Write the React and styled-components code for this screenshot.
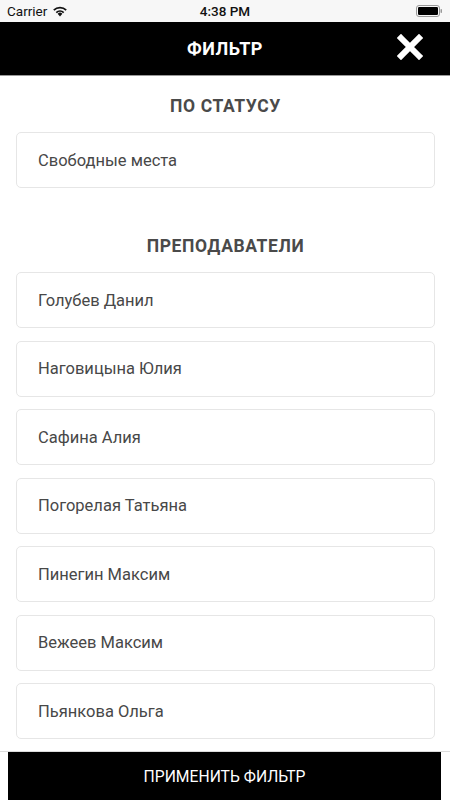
import React from 'react';
import styled, { createGlobalStyle } from 'styled-components';

const GlobalStyle = createGlobalStyle`
    html, body {
        margin: 0;
        padding: 0;
        background: #fff;
        font-family: Roboto, "Noto Sans", "Liberation Sans", sans-serif;
    }
`;

const Screen = styled.div`
    width: 450px;
    height: 800px;
    display: flex;
    flex-direction: column;
    background: #fff;
    overflow: hidden;
`;

const StatusBar = styled.div`
    height: 22px;
    background: #f7f7f7;
    display: grid;
    grid-template-columns: 1fr auto 1fr;
    align-items: center;
    padding: 0 7px;
    font-size: 13.5px;
    color: #111;
`;

const Carrier = styled.div`
    display: flex;
    align-items: center;
    gap: 5px;
`;

const Time = styled.div`
    font-weight: 500;
`;

const Battery = styled.div`
    justify-self: end;
    display: flex;
    align-items: center;
`;

const Header = styled.div`
    height: 53px;
    background: #000;
    border-bottom: 1px solid #999;
    display: flex;
    align-items: center;
    justify-content: center;
    position: relative;
`;

const Title = styled.h1`
    margin: 0;
    color: #fff;
    font-size: 18px;
    font-weight: 700;
    letter-spacing: 0.5px;
`;

const Close = styled.button`
    position: absolute;
    right: 26px;
    top: 11px;
    width: 28px;
    height: 28px;
    padding: 0;
    border: none;
    background: none;
    display: flex;
    align-items: center;
    justify-content: center;
`;

const Content = styled.div`
    flex: 1;
    overflow: hidden;
    padding: 0 15px 0 16px;
`;

const SectionTitle = styled.h2`
    margin: ${p => p.$mt}px 0 16px;
    line-height: 20px;
    text-align: center;
    font-size: 17.5px;
    font-weight: 700;
    color: #4a4a4a;
    letter-spacing: 0.6px;
`;

const List = styled.div`
    display: flex;
    flex-direction: column;
    gap: 12.5px;
`;

const Item = styled.div`
    height: 56px;
    box-sizing: border-box;
    border: 1px solid #e6e6e6;
    border-radius: 5px;
    display: flex;
    align-items: center;
    padding-left: 21px;
    font-size: 16.5px;
    color: #484848;
`;

const Footer = styled.div`
    border-top: 1px solid #dcdcdc;
    padding: 0 9px 0 8px;
`;

const ApplyButton = styled.button`
    width: 100%;
    height: 48px;
    border: none;
    background: #000;
    color: #fff;
    font-family: inherit;
    font-size: 15.7px;
    display: flex;
    align-items: center;
    justify-content: center;
`;

const teachers = [
    'Голубев Данил',
    'Наговицына Юлия',
    'Сафина Алия',
    'Погорелая Татьяна',
    'Пинегин Максим',
    'Вежеев Максим',
    'Пьянкова Ольга',
];

const App = () => (
    <>
        <GlobalStyle />
        <Screen>
            <StatusBar>
                <Carrier>
                    Carrier
                    <svg width="16" height="12" viewBox="0 0 16 12">
                        <path d="M8 11.5 L5.6 8.8 A3.4 3.4 0 0 1 10.4 8.8 Z" fill="#111" />
                        <path d="M3.7 6.9 A6.2 6.2 0 0 1 12.3 6.9 L11.1 8.2 A4.5 4.5 0 0 0 4.9 8.2 Z" fill="#111" />
                        <path d="M1.2 4.4 A9.8 9.8 0 0 1 14.8 4.4 L13.6 5.7 A8 8 0 0 0 2.4 5.7 Z" fill="#111" />
                    </svg>
                </Carrier>
                <Time>4:38 PM</Time>
                <Battery>
                    <svg width="27" height="12" viewBox="0 0 27 12">
                        <rect x="0.5" y="0.5" width="23" height="11" rx="2.5" fill="none" stroke="#999" />
                        <rect x="2" y="2" width="20" height="8" rx="1.2" fill="#000" />
                        <rect x="24.5" y="4" width="1.5" height="4" rx="0.7" fill="#999" />
                    </svg>
                </Battery>
            </StatusBar>
            <Header>
                <Title>ФИЛЬТР</Title>
                <Close aria-label="close">
                    <svg width="26" height="26" viewBox="0 0 26 26">
                        <path d="M4 4 L22 22 M22 4 L4 22" stroke="#fff" strokeWidth="6" strokeLinecap="square" />
                    </svg>
                </Close>
            </Header>
            <Content>
                <SectionTitle $mt={20}>ПО СТАТУСУ</SectionTitle>
                <List>
                    <Item>Свободные места</Item>
                </List>
                <SectionTitle $mt={48}>ПРЕПОДАВАТЕЛИ</SectionTitle>
                <List>
                    {teachers.map(name => (
                        <Item key={name}>{name}</Item>
                    ))}
                </List>
            </Content>
            <Footer>
                <ApplyButton>ПРИМЕНИТЬ ФИЛЬТР</ApplyButton>
            </Footer>
        </Screen>
    </>
);

export default App;
